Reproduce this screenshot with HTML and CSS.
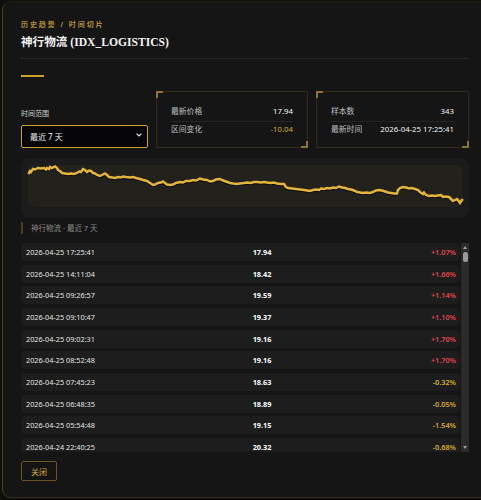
FILE: index.html
```html
<!DOCTYPE html>
<html lang="zh-CN">
<head>
<meta charset="utf-8">
<title>历史趋势</title>
<link rel="stylesheet" href="styles.css">
</head>
<body>
<div class="panel">
  <div class="crumb">历史趋势 / 时间切片</div>
  <h1 class="title">神行物流 (IDX_LOGISTICS)</h1>
  <div class="accent"></div>

  <div class="stats">
    <div class="range">
      <label class="range-label" for="range">时间范围</label>
      <div class="select-wrap">
        <select id="range" class="select">
          <option>最近 7 天</option>
          <option>最近 30 天</option>
        </select>
        <svg class="chevron" width="6" height="4" viewBox="0 0 6 4"><path d="M0.6 0.6 L3 3 L5.4 0.6" fill="none" stroke="#e8e8e8" stroke-width="1.2"/></svg>
      </div>
    </div>
    <div class="box">
      <span class="corner tl"></span><span class="corner br"></span>
      <div class="kv first"><span class="k">最新价格</span><span class="v">17.94</span></div>
      <div class="kv"><span class="k">区间变化</span><span class="v gold">-10.04</span></div>
    </div>
    <div class="box">
      <span class="corner tl"></span><span class="corner br"></span>
      <div class="kv first"><span class="k">样本数</span><span class="v">343</span></div>
      <div class="kv"><span class="k">最新时间</span><span class="v">2026-04-25 17:25:41</span></div>
    </div>
  </div>

  <div class="chart">
    <div class="plot">
      <svg class="line" width="434" height="42" viewBox="0 0 434 42" overflow="visible">
        <polyline class="shadow" points="1,8 2,6 3,7 5,4 7,4.5 10,3 13,3.5 16,3 18,4.5 19,3 21,4 22,2 24,3 27,1.5 29,3 30,5 32,6 34,8 37,8.5 40,9 43,8.5 46,9 49,8 51,6.5 53,7 55,4 57,5 59,7 61,5.5 63,6 65,8 67,8.5 69,10 72,11 74,10 77,8.5 79,10 81,12 84,12.5 87,13 90,12 93,12.5 95,11.5 98,12 102,12.5 105,12 108,13 112,14 115,15 119,16 122,18 125,20 127,19.5 130,18 133,17.5 135,16.5 137,18 139,19.5 142,20 145,19.5 148,18 152,17 155,17.5 158,16 162,16 165,15 168,15.5 172,13.5 175,14.5 179,15 182,16.5 185,16 188,14.5 192,14 195,15.5 198,16.5 202,18 205,18.5 209,19 212,18.5 216,18 219,17.5 223,18 226,17 229,17 233,17.5 236,17 239,17.5 243,18 246,17.5 249,18.5 253,19 256,19 258,22 260,23 264,23.5 268,24 272,24.5 276,25 279,25.5 282,26 285,25 288,24.5 291,25 293,23.5 296,24 299,23 302,23.5 305,22.5 308,23 311,21.5 314,22.5 317,23 320,24 323,24.5 326,25.5 329,27 332,27.5 335,28 338,27.5 342,28 345,27 348,25.5 351,25 354,25.5 357,26.5 360,27.5 363,28 366,28.5 369,28.5 370,25 372,23 375,22 378,22.5 381,23.5 384,23 387,24 390,25 392,27 395,29 396,27.5 398,30 401,31 404,30.5 407,31 410,30.5 413,30 415,32 418,31.5 421,32 423,34 425,36 427,35 429,34 431,36.5 432,38 434,35"/>
        <polyline class="stroke" points="1,8 2,6 3,7 5,4 7,4.5 10,3 13,3.5 16,3 18,4.5 19,3 21,4 22,2 24,3 27,1.5 29,3 30,5 32,6 34,8 37,8.5 40,9 43,8.5 46,9 49,8 51,6.5 53,7 55,4 57,5 59,7 61,5.5 63,6 65,8 67,8.5 69,10 72,11 74,10 77,8.5 79,10 81,12 84,12.5 87,13 90,12 93,12.5 95,11.5 98,12 102,12.5 105,12 108,13 112,14 115,15 119,16 122,18 125,20 127,19.5 130,18 133,17.5 135,16.5 137,18 139,19.5 142,20 145,19.5 148,18 152,17 155,17.5 158,16 162,16 165,15 168,15.5 172,13.5 175,14.5 179,15 182,16.5 185,16 188,14.5 192,14 195,15.5 198,16.5 202,18 205,18.5 209,19 212,18.5 216,18 219,17.5 223,18 226,17 229,17 233,17.5 236,17 239,17.5 243,18 246,17.5 249,18.5 253,19 256,19 258,22 260,23 264,23.5 268,24 272,24.5 276,25 279,25.5 282,26 285,25 288,24.5 291,25 293,23.5 296,24 299,23 302,23.5 305,22.5 308,23 311,21.5 314,22.5 317,23 320,24 323,24.5 326,25.5 329,27 332,27.5 335,28 338,27.5 342,28 345,27 348,25.5 351,25 354,25.5 357,26.5 360,27.5 363,28 366,28.5 369,28.5 370,25 372,23 375,22 378,22.5 381,23.5 384,23 387,24 390,25 392,27 395,29 396,27.5 398,30 401,31 404,30.5 407,31 410,30.5 413,30 415,32 418,31.5 421,32 423,34 425,36 427,35 429,34 431,36.5 432,38 434,35"/>
      </svg>
    </div>
  </div>
  <div class="caption">神行物流 · 最近 7 天</div>

  <div class="list-wrap">
    <div class="list">
      <div class="row"><span class="t">2026-04-25 17:25:41</span><span class="p">17.94</span><span class="c up">+1.07%</span></div>
      <div class="row"><span class="t">2026-04-25 14:11:04</span><span class="p">18.42</span><span class="c up">+1.66%</span></div>
      <div class="row"><span class="t">2026-04-25 09:26:57</span><span class="p">19.59</span><span class="c up">+1.14%</span></div>
      <div class="row"><span class="t">2026-04-25 09:10:47</span><span class="p">19.37</span><span class="c up">+1.10%</span></div>
      <div class="row"><span class="t">2026-04-25 09:02:31</span><span class="p">19.16</span><span class="c up">+1.70%</span></div>
      <div class="row"><span class="t">2026-04-25 08:52:48</span><span class="p">19.16</span><span class="c up">+1.70%</span></div>
      <div class="row"><span class="t">2026-04-25 07:45:23</span><span class="p">18.63</span><span class="c down">-0.32%</span></div>
      <div class="row"><span class="t">2026-04-25 06:48:35</span><span class="p">18.89</span><span class="c down">-0.05%</span></div>
      <div class="row"><span class="t">2026-04-25 05:54:48</span><span class="p">19.15</span><span class="c down">-1.54%</span></div>
      <div class="row"><span class="t">2026-04-24 22:40:25</span><span class="p">20.32</span><span class="c down">-0.68%</span></div>
    </div>
    <div class="scrollbar" aria-hidden="true">
      <span class="arrow up-arrow"></span>
      <span class="thumb"></span>
      <span class="track-fill"></span>
      <span class="arrow down-arrow"></span>
    </div>
  </div>

  <button class="close" type="button">关闭</button>
</div>
</body>
</html>
```
FILE: styles.css
```css
html, body {
  margin: 0;
  padding: 0;
}
body {
  background: #0f0f0f;
  height: 500px;
  overflow: hidden;
  font-family: "Noto Sans", "Noto Sans CJK SC", sans-serif;
  color: #e6e6e6;
}
.panel {
  box-sizing: border-box;
  margin: 1px 0 0 2px;
  width: 486px;
  height: 497px;
  background: #151515;
  border: 1px solid #241f15;
  border-left-color: #4a3c1c;
  border-bottom-color: #3a3018;
  border-radius: 9px;
  padding: 18px 18px 16px;
  display: flex;
  flex-direction: column;
}
.crumb {
  font-size: 7px;
  line-height: 10px;
  height: 10px;
  letter-spacing: 1.9px;
  color: #b08d34;
  font-weight: 700;
}
.title {
  margin: 5px 0 0;
  font-family: "Liberation Serif", "Noto Sans CJK SC", serif;
  font-size: 11.6px;
  line-height: 16px;
  font-weight: 700;
  color: #f2f2f2;
  padding-bottom: 7px;
  border-bottom: 1px dotted #3d3522;
}
.accent {
  margin-top: 16px;
  width: 23px;
  height: 2px;
  background: #c9a227;
  flex: none;
}
.stats {
  margin-top: 14px;
  display: grid;
  grid-template-columns: 127px 152px 153px;
  column-gap: 8px;
  align-items: end;
}
.range {
  display: flex;
  flex-direction: column;
  gap: 4px;
}
.range-label {
  font-size: 7px;
  line-height: 10px;
  color: #cfcfcf;
}
.select-wrap {
  position: relative;
}
.select {
  appearance: none;
  -webkit-appearance: none;
  box-sizing: border-box;
  width: 127px;
  height: 23px;
  margin: 0;
  padding: 0 0 0 8px;
  background: #060608;
  border: 1px solid #c9a227;
  border-radius: 2px;
  color: #f0f0f0;
  font-family: "Noto Sans", "Noto Sans CJK SC", sans-serif;
  font-size: 8px;
  outline: none;
}
.chevron {
  position: absolute;
  right: 6px;
  top: 10px;
}
.box {
  position: relative;
  box-sizing: border-box;
  height: 57px;
  border: 1px solid #2f2a1d;
  padding: 14px 14px 13px;
}
.corner {
  position: absolute;
  width: 5px;
  height: 5px;
  border-color: #8c7330;
  border-style: solid;
  border-width: 0;
}
.corner.tl {
  top: -1px;
  left: -1px;
  border-top-width: 2px;
  border-left-width: 2px;
}
.corner.br {
  bottom: -1px;
  right: -1px;
  border-bottom-width: 2px;
  border-right-width: 2px;
}
.kv {
  display: flex;
  justify-content: space-between;
  font-size: 7.8px;
  line-height: 10px;
  padding-top: 2px;
}
.kv.first {
  padding-top: 0;
  padding-bottom: 5px;
  border-bottom: 1px solid #252525;
}
.k {
  color: #bdbdbd;
}
.v {
  color: #f2f2f2;
}
.v.gold {
  color: #d9ad2b;
}
.chart {
  margin-top: 10px;
  box-sizing: border-box;
  height: 60px;
  background: #1b1b1b;
  border-radius: 8px;
  padding: 7px 7px 11px;
  flex: none;
}
.plot {
  height: 42px;
  background: #23211b;
  border-radius: 5px;
}
.line {
  display: block;
}
.line .shadow {
  fill: none;
  stroke: #0c0b08;
  stroke-width: 2.6;
  stroke-linejoin: round;
  transform: translateY(1px);
}
.line .stroke {
  fill: none;
  stroke: #e3b53a;
  stroke-width: 2.5;
  stroke-linejoin: miter;
  stroke-linecap: square;
}
.caption {
  margin-top: 4px;
  height: 12px;
  line-height: 12px;
  font-size: 7.5px;
  color: #8a8a8a;
  border-left: 2px solid #4a3d1c;
  padding-left: 8px;
  flex: none;
}
.list-wrap {
  margin-top: 9px;
  height: 209px;
  flex: none;
  display: flex;
  gap: 1px;
}
.list {
  flex: 1;
  overflow: hidden;
  display: flex;
  flex-direction: column;
  gap: 3.67px;
}
.row {
  flex: none;
  height: 18px;
  box-sizing: border-box;
  display: grid;
  grid-template-columns: 205px 62px 1fr;
  align-items: center;
  padding: 0 4px 0 5px;
  background: #1d1d1d;
  border-radius: 5px;
  font-size: 7.3px;
}
.t {
  color: #e4e4e4;
}
.p {
  text-align: center;
  font-weight: 700;
  color: #ffffff;
}
.c {
  text-align: right;
  font-weight: 600;
}
.c.up {
  color: #e2474b;
}
.c.down {
  color: #d9ad2b;
}
.scrollbar {
  width: 8px;
  flex: none;
  background: #2b2b2b;
  display: flex;
  flex-direction: column;
  align-items: center;
  padding: 3px 0;
  box-sizing: border-box;
}
.arrow {
  width: 0;
  height: 0;
  border-left: 2.5px solid transparent;
  border-right: 2.5px solid transparent;
  flex: none;
}
.up-arrow {
  border-bottom: 3px solid #a0a0a0;
}
.down-arrow {
  border-top: 3px solid #a0a0a0;
}
.thumb {
  margin-top: 3px;
  width: 5px;
  height: 10px;
  border-radius: 3px;
  background: #9a9a9a;
  flex: none;
}
.track-fill {
  flex: 1;
}
.close {
  margin-top: 9px;
  align-self: flex-start;
  width: 36px;
  height: 20px;
  padding: 0;
  background: #141414;
  border: 1px solid #6a5624;
  border-radius: 2px;
  color: #d9ad2b;
  font-family: "Noto Sans", "Noto Sans CJK SC", sans-serif;
  font-size: 8px;
  flex: none;
}
```
